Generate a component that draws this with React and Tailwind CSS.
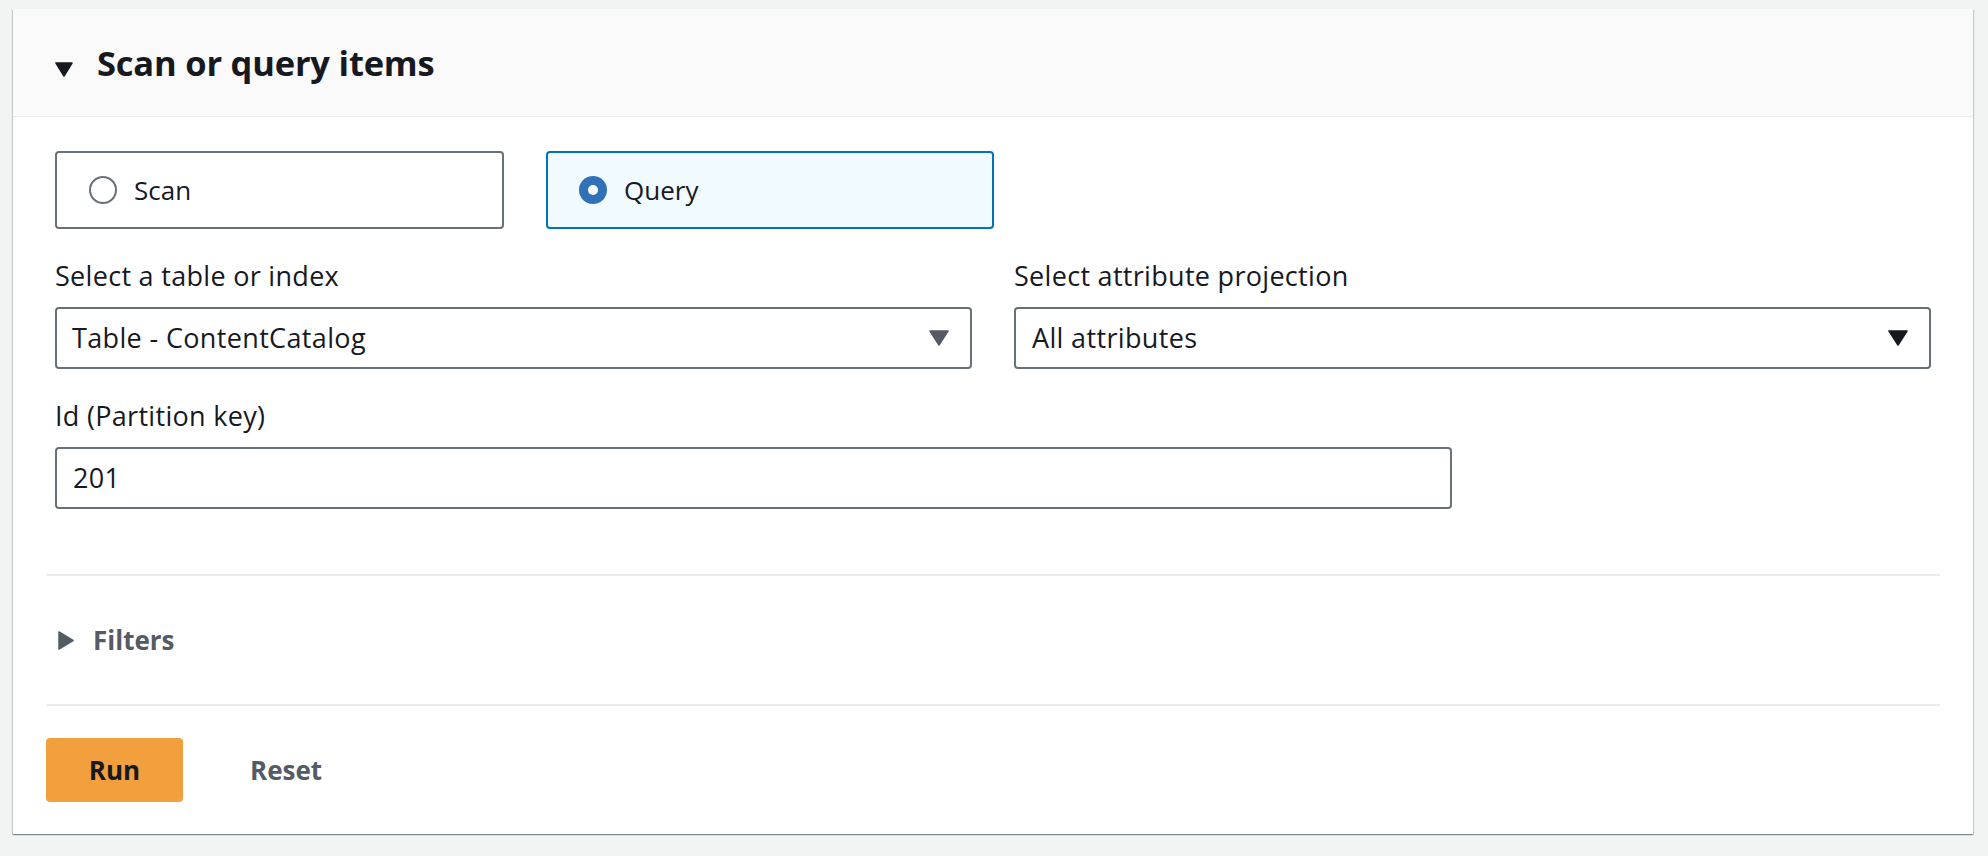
import React from "react";

function CaretDown({ className, color }) {
  return (
    <svg className={className} width="20" height="16" viewBox="0 0 20 16">
      <polygon points="1,1 19,1 10,15" fill={color} stroke={color} strokeWidth="1.5" strokeLinejoin="round" />
    </svg>
  );
}

export default function App() {
  return (
    <div className="min-h-[856px] w-full bg-[#f2f3f3] pl-[13px] pr-[15px] pt-[9px] font-['Open_Sans','Noto_Sans',sans-serif] text-[#16191f]">
      <div className="w-full bg-white shadow-[0_1px_1px_0_rgba(0,28,36,0.3),1px_1px_1px_0_rgba(0,28,36,0.15),-1px_1px_1px_0_rgba(0,28,36,0.15)]">
        {/* Header */}
        <div className="flex h-[108px] items-center border-b border-[#eaeded] bg-[#fafafa] pl-[42px]">
          <svg width="18" height="15" viewBox="0 0 18 15" className="mt-[14px]">
            <polygon points="1,1 17,1 9,14" fill="#16191f" stroke="#16191f" strokeWidth="1.5" strokeLinejoin="round" />
          </svg>
          <h2 className="ml-[24px] text-[34.5px] font-bold leading-[44px] tracking-[-0.2px]">Scan or query items</h2>
        </div>

        {/* Body */}
        <div className="px-[42px] pt-[34px]">
          <div className="flex gap-[42px]">
            <div className="flex h-[78px] w-[449px] items-center rounded-[4px] border-2 border-[#687078] bg-white pl-[32px]">
              <span className="h-[28px] w-[28px] rounded-full border-2 border-[#687078] bg-white" />
              <span className="ml-[17px] text-[26px] leading-[36px]">Scan</span>
            </div>
            <div className="flex h-[78px] w-[448px] items-center rounded-[4px] border-2 border-[#0073bb] bg-[#f1faff] pl-[31px]">
              <svg width="28" height="28" viewBox="0 0 28 28">
                <circle cx="14" cy="14" r="14" fill="#2f72b8" />
                <circle cx="14" cy="14" r="5" fill="#ffffff" />
              </svg>
              <span className="ml-[17px] text-[26px] leading-[36px]">Query</span>
            </div>
          </div>

          <div className="mt-[29px] grid grid-cols-2 gap-x-[42px]">
            <div className="flex flex-col">
              <label className="text-[27px] leading-[36px] tracking-[0.3px]">Select a table or index</label>
              <div className="mt-[13px] flex h-[62px] items-center justify-between rounded-[4px] border-2 border-[#687078] bg-white pl-[15px] pr-[21px]">
                <span className="text-[27px] leading-[36px] tracking-[0.35px]">Table - ContentCatalog</span>
                <CaretDown color="#545b64" />
              </div>
            </div>
            <div className="flex flex-col">
              <label className="text-[27px] leading-[36px] tracking-[0.3px]">Select attribute projection</label>
              <div className="mt-[13px] flex h-[62px] items-center justify-between rounded-[4px] border-2 border-[#687078] bg-white pl-[16px] pr-[21px]">
                <span className="text-[27px] leading-[36px] tracking-[0.35px]">All attributes</span>
                <CaretDown color="#16191f" />
              </div>
            </div>
          </div>

          <div className="mt-[29px] grid grid-cols-4 gap-x-[42px]">
            <div className="col-span-3 flex flex-col">
              <label className="text-[27px] leading-[36px] tracking-[0.3px]">Id (Partition key)</label>
              <div className="mt-[13px] flex h-[62px] items-center rounded-[4px] border-2 border-[#687078] bg-white pl-[16px]">
                <span className="text-[27px] leading-[36px] tracking-[0.3px]">201</span>
              </div>
            </div>
          </div>
        </div>

        <div className="mx-[33px] mt-[65px] h-[2px] bg-[#eaeded]" />

        <div className="flex items-center py-[46px] pl-[45px]">
          <svg width="16" height="19" viewBox="0 0 16 19">
            <polygon points="1,1 15,9.5 1,18" fill="#545b64" stroke="#545b64" strokeWidth="1.5" strokeLinejoin="round" />
          </svg>
          <span className="ml-[19px] text-[26px] font-bold leading-[36px] text-[#545b64]">Filters</span>
        </div>

        <div className="mx-[33px] h-[2px] bg-[#eaeded]" />

        <div className="flex items-center px-[33px] pb-[32px] pt-[32px]">
          <button className="flex h-[64px] w-[137px] items-center justify-center rounded-[4px] bg-[#f2a03d] text-[26px] font-bold text-[#16191f]">
            Run
          </button>
          <button className="ml-[67px] text-[26px] font-bold text-[#545b64]">Reset</button>
        </div>
      </div>
    </div>
  );
}
